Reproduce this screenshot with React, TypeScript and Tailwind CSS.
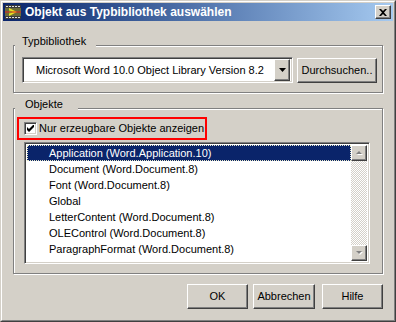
const raised =
  "border border-t-white border-l-white border-r-[#404040] border-b-[#404040] shadow-[inset_-1px_-1px_0_#808080]";
const sunken =
  "border border-t-[#808080] border-l-[#808080] border-r-white border-b-white shadow-[inset_1px_1px_0_#404040,inset_-1px_-1px_0_#d4d0c8]";

const objects = [
  "Application (Word.Application.10)",
  "Document (Word.Document.8)",
  "Font (Word.Document.8)",
  "Global",
  "LetterContent (Word.Document.8)",
  "OLEControl (Word.Document.8)",
  "ParagraphFormat (Word.Document.8)",
];

function TitleIcon() {
  return (
    <svg width="16" height="14" viewBox="0 0 16 14">
      <rect x="0" y="0" width="16" height="14" fill="#3a3a3a" />
      {[1, 4, 7, 10, 13].map((x) => (
        <g key={x}>
          <rect x={x} y="1" width="2" height="1" fill="#e0e0e0" />
          <rect x={x} y="12" width="2" height="1" fill="#e0e0e0" />
        </g>
      ))}
      <rect x="0" y="3" width="16" height="8" fill="#6b6b3a" />
      <polygon points="4,3 12,7 4,11" fill="#e8e020" />
      <polygon points="4,5 8,7 4,9" fill="#7ac030" />
      <line x1="0" y1="7" x2="16" y2="7" stroke="#e02020" strokeWidth="1" />
    </svg>
  );
}

function Arrow({ up }: { up?: boolean }) {
  return (
    <div className={`${raised} w-[16px] h-[16px] bg-[#d4d0c8] flex items-center justify-center`}>
      <svg width="7" height="5" viewBox="0 0 7 5">
        {up ? (
          <>
            <polygon points="1,4 4,1 7,4" fill="#ffffff" />
            <polygon points="0,3 3,0 6,3" fill="#808080" />
          </>
        ) : (
          <>
            <polygon points="1,1 7,1 4,4" fill="#ffffff" />
            <polygon points="0,0 6,0 3,3" fill="#808080" />
          </>
        )}
      </svg>
    </div>
  );
}

export default function App() {
  return (
    <div className="w-[396px] h-[322px] bg-[#d4d0c8] border border-t-[#d4d0c8] border-l-[#d4d0c8] border-r-[#404040] border-b-[#404040] font-['Liberation_Sans',Arial,sans-serif] text-[11px] text-black">
      <div className="h-full border border-t-white border-l-white border-r-[#808080] border-b-[#808080] p-[1px] flex flex-col">
        {/* title bar */}
        <div className="h-[18px] flex items-center bg-gradient-to-r from-[#0a246a] to-[#a6caf0]">
          <div className="ml-[2px] mr-[4px]">
            <TitleIcon />
          </div>
          <span className="text-white font-bold text-[12px] leading-[18px] flex-1">
            Objekt aus Typbibliothek auswählen
          </span>
          <div className={`${raised} mr-[2px] w-[16px] h-[14px] bg-[#d4d0c8] flex items-center justify-center`}>
            <svg width="8" height="7" viewBox="0 0 8 7">
              <path d="M0 0h2l2 2 2-2h2L5 3.5 8 7H6L4 5 2 7H0l3-3.5z" fill="#000" />
            </svg>
          </div>
        </div>

        <div className="px-[10px] flex flex-col">
          {/* Typbibliothek */}
          <div className="relative mt-[24px] h-[48px] border border-[#808080] shadow-[inset_1px_1px_0_#fff,1px_1px_0_#fff] pt-[11px] pl-[8px] flex">
            <span className="absolute left-[1px] -top-[11px] bg-[#d4d0c8] pl-[7px] pr-[10px] leading-[13px]">
              Typbibliothek
            </span>
            <div className={`${sunken} w-[271px] h-[26px] bg-white flex items-center`}>
              <span className="flex-1 pl-[13px] leading-[13px]">
                Microsoft Word 10.0 Object Library Version 8.2
              </span>
              <div className={`${raised} w-[16px] h-[22px] mr-[2px] bg-[#d4d0c8] flex items-center justify-center`}>
                <svg width="7" height="4" viewBox="0 0 7 4">
                  <polygon points="0,0 7,0 3.5,4" fill="#000" />
                </svg>
              </div>
            </div>
            <button className={`${raised} ml-[4px] mt-[1px] w-[80px] h-[25px] bg-[#d4d0c8] leading-[13px]`}>
              Durchsuchen..
            </button>
          </div>

          {/* Objekte */}
          <div className="relative mt-[15px] h-[166px] border border-[#808080] shadow-[inset_1px_1px_0_#fff,1px_1px_0_#fff] pt-[8px] pl-[3px] flex flex-col items-start">
            <span className="absolute left-[1px] -top-[11px] bg-[#d4d0c8] pl-[10px] pr-[15px] leading-[13px]">
              Objekte
            </span>
            <div className="w-[190px] h-[23px] border-2 border-[#ff0000] flex items-center pl-[5px]">
              <div className={`${sunken} w-[13px] h-[13px] bg-white flex items-center justify-center`}>
                <svg width="7" height="7" viewBox="0 0 7 7">
                  <path d="M0 2v3l2 2 5-5V-1L2 4z" fill="#000" />
                </svg>
              </div>
              <span className="ml-[2px] leading-[13px]">Nur erzeugbare Objekte anzeigen</span>
            </div>
            <div className={`${sunken} ml-[7px] mt-[2px] w-[346px] h-[122px] bg-white p-[2px] flex`}>
              <div className="flex-1 flex flex-col">
                {objects.map((o, i) => (
                  <div
                    key={o}
                    className={
                      i === 0
                        ? "h-[16px] leading-[16px] pl-[22px] bg-[#0a246a] text-white outline-1 outline-dotted outline-[#e8e8c8] -outline-offset-1"
                        : "h-[16px] leading-[16px] pl-[22px]"
                    }
                  >
                    {o}
                  </div>
                ))}
              </div>
              <div className="w-[16px] flex flex-col">
                <Arrow up />
                <div className="flex-1 bg-[repeating-conic-gradient(#d4d0c8_0_25%,#ffffff_0_50%)] bg-[length:2px_2px]" />
                <Arrow />
              </div>
            </div>
          </div>

          {/* buttons */}
          <div className="mt-[10px] flex justify-end">
            <button className={`${raised} w-[61px] h-[25px] bg-[#d4d0c8]`}>OK</button>
            <button className={`${raised} ml-[5px] w-[62px] h-[25px] bg-[#d4d0c8]`}>Abbrechen</button>
            <button className={`${raised} ml-[7px] w-[61px] h-[25px] bg-[#d4d0c8]`}>Hilfe</button>
          </div>
        </div>
      </div>
    </div>
  );
}
